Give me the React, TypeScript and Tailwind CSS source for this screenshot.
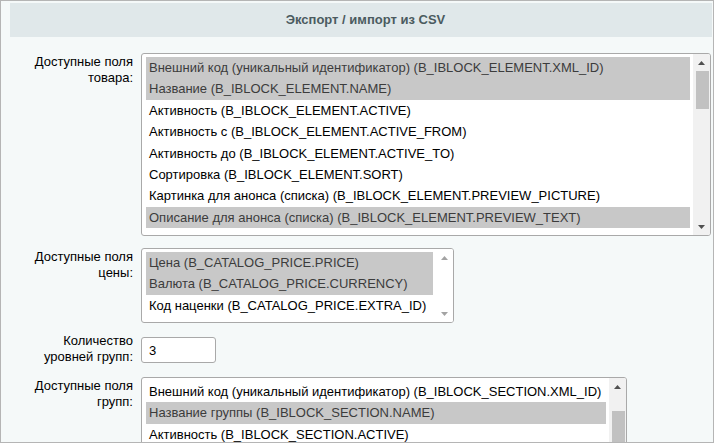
import React from 'react';

type Opt = { text: string; sel?: boolean };

const GOODS: Opt[] = [
  { text: 'Внешний код (уникальный идентификатор) (B_IBLOCK_ELEMENT.XML_ID)', sel: true },
  { text: 'Название (B_IBLOCK_ELEMENT.NAME)', sel: true },
  { text: 'Активность (B_IBLOCK_ELEMENT.ACTIVE)' },
  { text: 'Активность с (B_IBLOCK_ELEMENT.ACTIVE_FROM)' },
  { text: 'Активность до (B_IBLOCK_ELEMENT.ACTIVE_TO)' },
  { text: 'Сортировка (B_IBLOCK_ELEMENT.SORT)' },
  { text: 'Картинка для анонса (списка) (B_IBLOCK_ELEMENT.PREVIEW_PICTURE)' },
  { text: 'Описание для анонса (списка) (B_IBLOCK_ELEMENT.PREVIEW_TEXT)', sel: true },
];

const PRICES: Opt[] = [
  { text: 'Цена (B_CATALOG_PRICE.PRICE)', sel: true },
  { text: 'Валюта (B_CATALOG_PRICE.CURRENCY)', sel: true },
  { text: 'Код наценки (B_CATALOG_PRICE.EXTRA_ID)' },
];

const GROUPS: Opt[] = [
  { text: 'Внешний код (уникальный идентификатор) (B_IBLOCK_SECTION.XML_ID)' },
  { text: 'Название группы (B_IBLOCK_SECTION.NAME)', sel: true },
  { text: 'Активность (B_IBLOCK_SECTION.ACTIVE)' },
  { text: 'Сортировка (B_IBLOCK_SECTION.SORT)' },
];

const Arrow = ({ down, color }: { down?: boolean; color: string }) => (
  <svg width="7" height="4" viewBox="0 0 7 4">
    <path d={down ? 'M0 0H7L3.5 4Z' : 'M0 4H7L3.5 0Z'} fill={color} />
  </svg>
);

// полоса прокрутки как в Chrome
const Scrollbar = ({ thumbTop, thumbH, disabled }: { thumbTop: number; thumbH: number; disabled?: boolean }) => {
  const c = disabled ? '#a3a3a3' : '#505050';
  return (
    <div className={`w-[17px] flex flex-col shrink-0 ${disabled ? 'bg-white' : 'bg-[#f1f1f1]'}`}>
      <div className="h-[17px] flex items-center justify-center shrink-0">
        <Arrow color={c} />
      </div>
      <div className="flex-1 relative">
        {!disabled && (
          <div
            className="absolute left-[3px] right-[1px] bg-[#c1c1c1]"
            style={{ top: thumbTop, height: thumbH }}
          />
        )}
      </div>
      <div className="h-[17px] flex items-center justify-center shrink-0">
        <Arrow down color={c} />
      </div>
    </div>
  );
};

const ListBox = ({
  items,
  className,
  thumbTop,
  thumbH,
  disabled,
}: {
  items: Opt[];
  className: string;
  thumbTop: number;
  thumbH: number;
  disabled?: boolean;
}) => (
  <div className={`flex bg-white border border-[#a9a9a9] rounded-[3px] overflow-hidden ${className}`}>
    <div className="flex-1 pl-[4px] pr-[3px] pt-[3px] overflow-hidden">
      {items.map((o, i) => (
        <div
          key={i}
          className={`h-[21.4px] leading-[21.4px] pl-[3px] whitespace-nowrap ${
            o.sel ? 'bg-[#c8c8c8] text-[#3c3c3c]' : 'text-black'
          }`}
        >
          {o.text}
        </div>
      ))}
    </div>
    <Scrollbar thumbTop={thumbTop} thumbH={thumbH} disabled={disabled} />
  </div>
);

const Label = ({ children }: { children: React.ReactNode }) => (
  <div className="w-[132px] shrink-0 text-right leading-[16px] text-black pt-[1px]">{children}</div>
);

export default function App() {
  return (
    <div className="w-[714px] h-[443px] border border-[#b5b5b5] bg-[#f5f9f9] overflow-hidden text-[13px] font-['Liberation_Sans',Arial,sans-serif]">
      <div className="ml-[9px] mr-[1px] mt-[2px] h-[34px] bg-[#e0e8ea] flex items-center justify-center pl-[9px] font-bold text-[#4b5b60]">
        Экспорт / импорт из CSV
      </div>

      <div className="flex mt-[16px]">
        <Label>
          Доступные поля
          <br />
          товара:
        </Label>
        <ListBox items={GOODS} className="ml-[8px] w-[570px] h-[183px]" thumbTop={0} thumbH={38} />
      </div>

      <div className="flex mt-[12px]">
        <Label>
          Доступные поля
          <br />
          цены:
        </Label>
        <ListBox items={PRICES} className="ml-[8px] w-[313px] h-[75px]" thumbTop={0} thumbH={0} disabled />
      </div>

      <div className="flex items-center mt-[10px]">
        <div className="w-[132px] shrink-0 text-right leading-[16px] text-black">
          Количество
          <br />
          уровней групп:
        </div>
        <input
          readOnly
          value="3"
          className="ml-[8px] mt-[2px] w-[75px] h-[26px] bg-white border border-[#a9a9a9] rounded-[3px] px-[7px] text-[13px] text-black outline-none"
        />
      </div>

      <div className="flex mt-[12px]">
        <Label>
          Доступные поля
          <br />
          групп:
        </Label>
        <ListBox items={GROUPS} className="ml-[8px] w-[486px] h-[120px]" thumbTop={16} thumbH={60} />
      </div>
    </div>
  );
}
